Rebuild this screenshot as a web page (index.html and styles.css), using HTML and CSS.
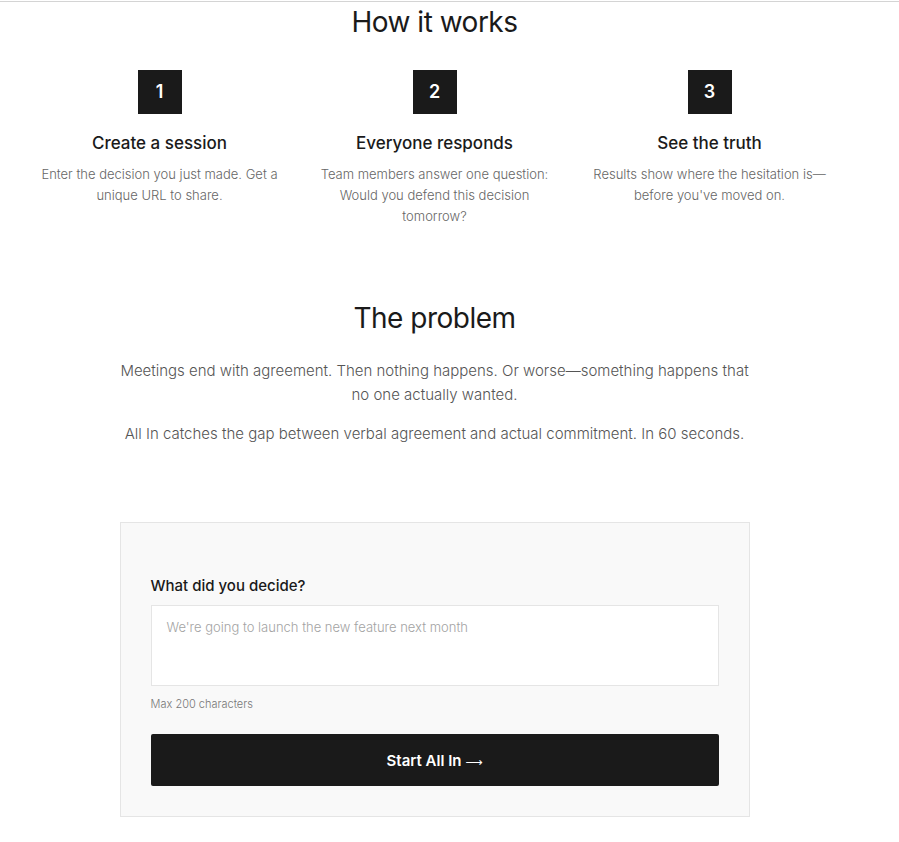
FILE: index.html
```html
<!DOCTYPE html>
<html lang="en">
<head>
<meta charset="utf-8">
<title>All In</title>
<link rel="stylesheet" href="styles.css">
</head>
<body>
<main class="page">
  <section class="how">
    <h2 class="section-title">How it works</h2>
    <div class="steps">
      <div class="step">
        <div class="step-num">1</div>
        <h3 class="step-title">Create a session</h3>
        <p class="step-desc">Enter the decision you just made. Get a unique URL to share.</p>
      </div>
      <div class="step">
        <div class="step-num">2</div>
        <h3 class="step-title">Everyone responds</h3>
        <p class="step-desc">Team members answer one question: Would you defend this decision tomorrow?</p>
      </div>
      <div class="step">
        <div class="step-num">3</div>
        <h3 class="step-title">See the truth</h3>
        <p class="step-desc">Results show where the hesitation is—before you've moved on.</p>
      </div>
    </div>
  </section>

  <section class="problem">
    <h2 class="section-title">The problem</h2>
    <p class="problem-text">Meetings end with agreement. Then nothing happens. Or worse—something happens that no one actually wanted.</p>
    <p class="problem-text">All In catches the gap between verbal agreement and actual commitment. In 60 seconds.</p>
  </section>

  <section class="form-card">
    <label class="form-label" for="decision">What did you decide?</label>
    <textarea id="decision" class="form-input" placeholder="We're going to launch the new feature next month"></textarea>
    <div class="form-hint">Max 200 characters</div>
    <button class="form-button" type="button">Start All In <span class="arrow">⟶</span></button>
  </section>
</main>
</body>
</html>
```

FILE: styles.css
```css
* { box-sizing: border-box; }

html, body {
  margin: 0;
  padding: 0;
  background: #ffffff;
}

body {
  font-family: Inter, "Noto Sans", sans-serif;
  color: #1a1a1a;
  padding-top: 1px;
}

.page {
  width: 869px;
  display: flex;
  flex-direction: column;
  align-items: center;
}

.page::before {
  content: "";
  display: block;
  width: 899px;
  align-self: flex-start;
  border-top: 1px solid #d4d4d4;
}

.section-title {
  margin: 0;
  font-size: 28px;
  font-weight: 400;
  line-height: 1.2;
  text-align: center;
  color: #1a1a1a;
  letter-spacing: -0.5px;
}

.how {
  padding-top: 4px;
  width: 100%;
  display: flex;
  flex-direction: column;
  align-items: center;
}

.steps {
  margin-top: 30px;
  display: grid;
  grid-template-columns: repeat(3, 250px);
  column-gap: 25px;
}

.step {
  display: flex;
  flex-direction: column;
  align-items: center;
  text-align: center;
}

.step-num {
  width: 44px;
  height: 44px;
  background: #1a1a1a;
  color: #ffffff;
  font-size: 18px;
  font-weight: 600;
  display: flex;
  align-items: center;
  justify-content: center;
}

.step-title {
  margin: 18px 0 0;
  font-size: 17px;
  font-weight: 500;
  line-height: 22px;
  color: #1a1a1a;
}

.step-desc {
  margin: 10px 0 0;
  font-size: 13px;
  font-weight: 300;
  line-height: 21px;
  color: #666666;
}

.problem {
  margin-top: 75px;
  width: 640px;
  display: flex;
  flex-direction: column;
  align-items: center;
}

.problem .section-title {
  margin-bottom: 24px;
}

.problem-text {
  margin: 0 0 15px;
  font-size: 15px;
  font-weight: 300;
  line-height: 24px;
  color: #555555;
  text-align: center;
}

.problem-text:last-child { margin-bottom: 0; }

.form-card {
  margin-top: 76px;
  width: 630px;
  background: #f9f9f9;
  border: 1px solid #e5e5e5;
  padding: 52px 30px 30px;
  display: flex;
  flex-direction: column;
}

.form-label {
  font-size: 15px;
  font-weight: 500;
  line-height: 22px;
  color: #1a1a1a;
  margin-bottom: 8px;
}

.form-input {
  height: 81px;
  resize: none;
  border: 1px solid #e5e5e5;
  background: #ffffff;
  padding: 12px 15px;
  font-family: Inter, "Noto Sans", sans-serif;
  font-size: 13px;
  font-weight: 300;
  line-height: 18px;
  color: #1a1a1a;
  border-radius: 0;
  outline: none;
}

.form-input::placeholder { color: #a3a3a3; }

.form-hint {
  margin-top: 10px;
  font-size: 11px;
  font-weight: 300;
  line-height: 16px;
  color: #777777;
}

.form-button {
  margin-top: 22px;
  height: 52px;
  background: #1a1a1a;
  color: #ffffff;
  border: none;
  border-radius: 2px;
  font-family: Inter, "Noto Sans", sans-serif;
  font-size: 15px;
  font-weight: 600;
}

.arrow {
  font-family: "DejaVu Sans", sans-serif;
  font-weight: 400;
  font-size: 12px;
}
```
